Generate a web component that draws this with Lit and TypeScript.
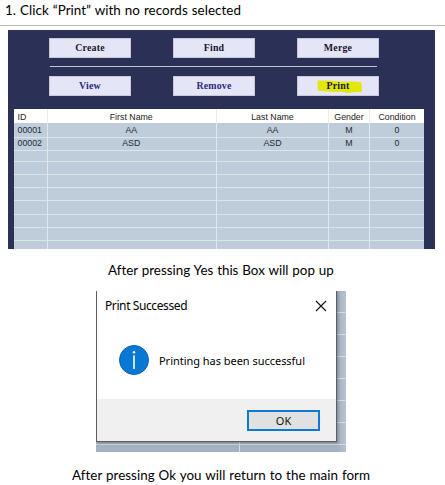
import { LitElement, html, css, svg } from "lit";
import { customElement, property } from "lit/decorators.js";

@customElement("menu-button")
class MenuButton extends LitElement {
  @property() label = "";
  @property() tone = "dark";
  static styles = css`
    :host { display: block; height: 20px; }
    .btn {
      box-sizing: border-box; width: 100%; height: 20px; padding: 0; margin: 0;
      display: flex; align-items: center; justify-content: center;
      background: #e5e5f8; border: 1px solid #c9c9d6; border-radius: 0;
      font: bold 9.9px/18px "Liberation Serif", serif; color: #17172c; letter-spacing: 0.2px;
      position: relative;
    }
    .blue { color: #2b2b80; }
    .mark { position: absolute; left: 19px; top: 3px; width: 46px; height: 14px; }
    .text { position: relative; }
  `;
  render() {
    return html`<button class="btn ${this.tone}">
      ${this.tone === "marked"
        ? html`<svg class="mark" viewBox="0 0 46 14">${svg`<path d="M.6 .6Q8 .2 16 .8L24 1.8Q36 1 44 2Q45.6 7 44.6 12.2Q38 11.8 31 13Q28 13 26 11.8Q12 12.2 .8 10.6Z" fill="#e3e70c"/>`}</svg>`
        : ""}
      <span class="text">${this.label}</span>
    </button>`;
  }
}

@customElement("record-table")
class RecordTable extends LitElement {
  static styles = css`
    :host { display: block; height: 140px; overflow: hidden; background: #bfccd9; }
    .row { display: grid; grid-template-columns: 34px 169px 112px 41px 54px; height: 13.08px; }
    .head { height: 14px; background: #fff; }
    .cell {
      box-sizing: border-box; border-right: 1px solid #e0e7ee; border-bottom: 1px solid #dde5ec;
      font: 8.8px/14px "Liberation Sans", sans-serif; color: #222b35; text-align: center; white-space: nowrap;
    }
    .head .cell { line-height: 16px; border-bottom: 0; border-right-color: #ececec; color: #222; }
    .cell:first-child { text-align: left; padding-left: 3.5px; }
    .cell:nth-child(2) { padding-right: 1.5px; }
    .cell:last-child { border-right: 0; }
  `;
  render() {
    const rows = [["00001", "AA", "AA", "M", "0"], ["00002", "ASD", "ASD", "M", "0"],
      ...Array.from({ length: 8 }, () => ["", "", "", "", ""])];
    return html`
      <div class="row head">${["ID", "First Name", "Last Name", "Gender", "Condition"].map((t) => html`<div class="cell">${t}</div>`)}</div>
      ${rows.map((r) => html`<div class="row">${r.map((t) => html`<div class="cell">${t}</div>`)}</div>`)}`;
  }
}

@customElement("message-box")
class MessageBox extends LitElement {
  static styles = css`
    :host { display: block; font: 12px/16px "Noto Sans", sans-serif; color: #000; }
    .backdrop {
      box-sizing: border-box; width: 250px; height: 161px; padding: 0 9px 10px 0; overflow: hidden;
      background:
        linear-gradient(#d5dbe3, #d5dbe3) 143px 151px / 1px 10px no-repeat,
        repeating-linear-gradient(transparent 0 21px, #d5dbe3 21px 22px),
        linear-gradient(90deg, #a5b1c0 240px, #b5c2d0 250px);
    }
    .box {
      box-sizing: border-box; height: 151px; border: 1px solid #5a5e63; border-top: 0;
      background: #fff; box-shadow: 1px 1px 3px rgba(40, 50, 65, 0.4); display: flex; flex-direction: column;
    }
    .title { height: 29px; display: flex; justify-content: space-between; align-items: center; padding: 0 9px 0 8px; }
    .body { flex: 1; display: flex; align-items: center; gap: 10px; padding: 1px 0 0 22px; }
    .foot { height: 42px; background: #f0f0f0; display: flex; align-items: center; justify-content: flex-end; padding-right: 16px; }
    .ok {
      box-sizing: border-box; width: 73px; height: 21px; border: 2px solid #0f78d0; background: #e1e1e1;
      font: 11px/16px "Noto Sans", sans-serif; padding: 1px 0 0; color: #111;
    }
    .name { letter-spacing: -0.4px; }
    .msg { font-size: 11px; letter-spacing: -0.03px; padding-top: 2px; }
    svg { display: block; flex: none; }
  `;
  render() {
    return html`<div class="backdrop"><div class="box">
      <div class="title"><span class="name">Print Successed</span>
        <svg width="12" height="12" viewBox="0 0 12 12"><path d="M1 1L11 11M11 1L1 11" stroke="#111" stroke-width="1.1" fill="none"/></svg></div>
      <div class="body">
        <svg width="30" height="30" viewBox="0 0 30 30"><circle cx="15" cy="15" r="14.5" fill="#0878d4" stroke="#0f62a8"/><path d="M14.2 10.5h1.6v13.5h-1.6z" fill="#fff"/><circle cx="15" cy="7.3" r="1.2" fill="#fff"/></svg>
        <span class="msg">Printing has been successful</span></div>
      <div class="foot"><button class="ok">OK</button></div>
    </div></div>`;
  }
}

@customElement("app-root")
class AppRoot extends LitElement {
  static styles = css`
    :host { display: block; width: 445px; height: 485px; overflow: hidden; background: #fff; }
    .page { display: flex; flex-direction: column; height: 485px; }
    .line { font: 13.4px/20px "Lato", sans-serif; color: #000; white-space: nowrap; letter-spacing: 0.03px; word-spacing: 0.5px; }
    .step { box-sizing: border-box; height: 26px; padding: 0 0 0 5px; border-bottom: 1px solid #b9beb4; letter-spacing: 0.05px; }
    .panel { box-sizing: border-box; margin: 4px 10px 0 8px; height: 219px; background: #2b3057; padding: 8px 11px 0 6px; }
    .buttons { display: grid; grid-template-columns: 82px 82px 82px; justify-content: space-between; margin: 0 45px 0 35px; }
    .divider { height: 1px; margin: 8px 47px 9px 36px; background: #c3c5d3; }
    record-table { margin-top: 13px; }
    .after { padding-left: 108px; margin-top: 11px; letter-spacing: -0.01px; }
    message-box { margin: 11px 0 0 96px; }
    .last { padding-left: 72px; margin-top: 13px; }
  `;
  render() {
    return html`<div class="page">
      <div class="line step"><span>1. Click “Print” with no records selected</span></div>
      <div class="panel">
        <div class="buttons"><menu-button label="Create"></menu-button><menu-button label="Find"></menu-button><menu-button label="Merge"></menu-button></div>
        <div class="divider"></div>
        <div class="buttons"><menu-button label="View" tone="blue"></menu-button><menu-button label="Remove" tone="blue"></menu-button><menu-button label="Print" tone="marked"></menu-button></div>
        <record-table></record-table>
      </div>
      <div class="line after"><span>After pressing Yes this Box will pop up</span></div>
      <message-box></message-box>
      <div class="line last"><span>After pressing Ok you will return to the main form</span></div>
    </div>`;
  }
}
